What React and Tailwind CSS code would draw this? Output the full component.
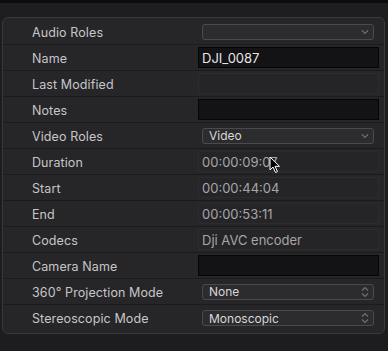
import React from 'react';

const rows = [
  { label: 'Audio Roles', kind: 'popup', value: '', arrow: 'down' },
  { label: 'Name', kind: 'input', value: 'DJI_0087' },
  { label: 'Last Modified', kind: 'static', value: '' },
  { label: 'Notes', kind: 'input', value: '' },
  { label: 'Video Roles', kind: 'popup', value: 'Video', arrow: 'down' },
  { label: 'Duration', kind: 'static', value: '00:00:09:07', cursor: true },
  { label: 'Start', kind: 'static', value: '00:00:44:04' },
  { label: 'End', kind: 'static', value: '00:00:53:11' },
  { label: 'Codecs', kind: 'static', value: 'Dji AVC encoder' },
  { label: 'Camera Name', kind: 'input', value: '' },
  { label: '360° Projection Mode', kind: 'popup', value: 'None', arrow: 'updown' },
  { label: 'Stereoscopic Mode', kind: 'popup', value: 'Monoscopic', arrow: 'updown' },
];

function Chevron({ type }) {
  if (type === 'updown') {
    return (
      <svg width="8" height="12" viewBox="0 0 8 12" fill="none" stroke="#6f6e72" strokeWidth="1.2">
        <path d="M1 4.5 L4 1.5 L7 4.5" />
        <path d="M1 7.5 L4 10.5 L7 7.5" />
      </svg>
    );
  }
  return (
    <svg width="8" height="6" viewBox="0 0 8 6" fill="none" stroke="#6f6e72" strokeWidth="1.2">
      <path d="M1 1.5 L4 4.5 L7 1.5" />
    </svg>
  );
}

function Cursor() {
  return (
    <svg className="absolute left-[70px] top-[4px]" width="12" height="18" viewBox="0 0 12 18">
      <path d="M1 1 L1 14 L4 11 L6.5 16.5 L8.5 15.6 L6 10.3 L10.5 10.3 Z" fill="#000" stroke="#fff" strokeWidth="1" strokeLinejoin="round" />
    </svg>
  );
}

function Value({ row }) {
  if (row.kind === 'popup') {
    return (
      <div className="ml-[4px] mr-[10px] h-[16px] flex items-center justify-between rounded-[3px] border border-[#4a494d] bg-[#2c2b2e] pl-[6px] pr-[4px]">
        <span className="text-[12px] text-[#d8d8da] leading-none pt-[1px]">{row.value}</span>
        <Chevron type={row.arrow} />
      </div>
    );
  }
  if (row.kind === 'input') {
    return (
      <div className="h-[21px] mr-[5px] flex items-center border border-[#050505] bg-[#131215] px-[3px]">
        <span className="text-[13px] text-[#e6e6e8] leading-none pt-[1px]">{row.value}</span>
      </div>
    );
  }
  return (
    <div className="relative h-[21px] mr-[5px] flex items-center border border-[#2c2b2e] bg-[#252427] px-[3px]">
      <span className="text-[13px] text-[#a6a6a9] leading-none pt-[2px]">{row.value}</span>
      {row.cursor && <Cursor />}
    </div>
  );
}

export default function App() {
  return (
    <div className="w-[388px] h-[351px] bg-[#1d1c1f] overflow-hidden" style={{ fontFamily: 'Inter, "Noto Sans", sans-serif' }}>
      <div className="h-[3px] bg-[#0c0c0d]" />
      <div className="h-[14px] bg-[#1e1d20]" />
      <div className="ml-[2px] w-[383px] rounded-[6px] border border-[#39383c] bg-[#262528] pt-[1px] pb-[2px]">
        {rows.map((row, i) => (
          <div
            key={row.label}
            className={`flex items-center h-[26px] ${i < rows.length - 1 ? 'border-b border-[#1b1a1d]' : ''}`}
          >
            <div className="w-[195px] pl-[29px] pt-[3px] text-[12.5px] text-[#c6c6c9] tracking-[0.1px]">{row.label}</div>
            <div className="flex-1">
              <Value row={row} />
            </div>
          </div>
        ))}
      </div>
    </div>
  );
}
